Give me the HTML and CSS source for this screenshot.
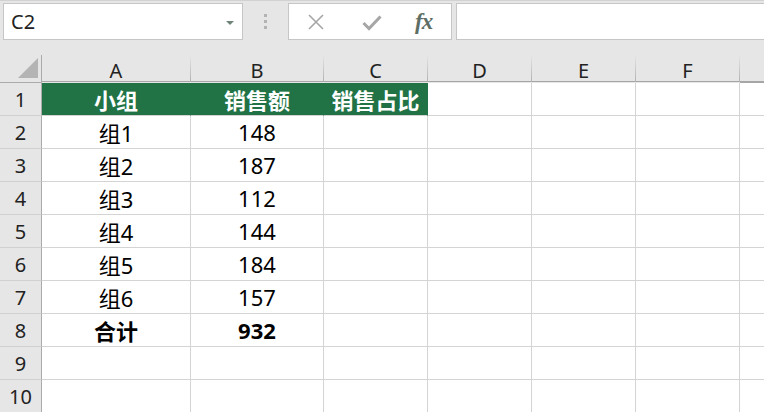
FILE: index.html
```html
<!DOCTYPE html>
<html lang="zh-CN">
<head>
<meta charset="utf-8">
<title>Sheet</title>
<link rel="stylesheet" href="styles.css">
</head>
<body>
<div class="app">
  <div class="toolbar">
    <div class="namebox">
      <span class="name">C2</span>
      <span class="arrow"></span>
    </div>
    <div class="grip"><i></i><i></i><i></i></div>
    <div class="fbuttons">
      <svg class="ico-x" width="16" height="16" viewBox="0 0 16 16"><path d="M1 1 L15 15 M15 1 L1 15" stroke="#a6a6a6" stroke-width="1.6" fill="none"/></svg>
      <svg class="ico-check" width="20" height="16" viewBox="0 0 20 16"><path d="M1.5 8 L7 13.5 L18.5 1.5" stroke="#a6a6a6" stroke-width="3" fill="none"/></svg>
      <span class="fx">fx</span>
    </div>
    <div class="finput"></div>
  </div>
  <div class="sheet">
    <div class="corner"><span class="tri"></span></div>
    <div class="colhead">A</div>
    <div class="colhead">B</div>
    <div class="colhead">C</div>
    <div class="colhead">D</div>
    <div class="colhead">E</div>
    <div class="colhead">F</div>
    <div class="colhead last"></div>

    <div class="rowhead">1</div>
    <div class="cell head">小组</div>
    <div class="cell head">销售额</div>
    <div class="cell head">销售占比</div>
    <div class="cell"></div><div class="cell"></div><div class="cell"></div><div class="cell"></div>

    <div class="rowhead">2</div>
    <div class="cell">组1</div><div class="cell">148</div>
    <div class="cell"></div><div class="cell"></div><div class="cell"></div><div class="cell"></div><div class="cell"></div>

    <div class="rowhead">3</div>
    <div class="cell">组2</div><div class="cell">187</div>
    <div class="cell"></div><div class="cell"></div><div class="cell"></div><div class="cell"></div><div class="cell"></div>

    <div class="rowhead">4</div>
    <div class="cell">组3</div><div class="cell">112</div>
    <div class="cell"></div><div class="cell"></div><div class="cell"></div><div class="cell"></div><div class="cell"></div>

    <div class="rowhead">5</div>
    <div class="cell">组4</div><div class="cell">144</div>
    <div class="cell"></div><div class="cell"></div><div class="cell"></div><div class="cell"></div><div class="cell"></div>

    <div class="rowhead">6</div>
    <div class="cell">组5</div><div class="cell">184</div>
    <div class="cell"></div><div class="cell"></div><div class="cell"></div><div class="cell"></div><div class="cell"></div>

    <div class="rowhead">7</div>
    <div class="cell">组6</div><div class="cell">157</div>
    <div class="cell"></div><div class="cell"></div><div class="cell"></div><div class="cell"></div><div class="cell"></div>

    <div class="rowhead">8</div>
    <div class="cell bold">合计</div><div class="cell bold">932</div>
    <div class="cell"></div><div class="cell"></div><div class="cell"></div><div class="cell"></div><div class="cell"></div>

    <div class="rowhead">9</div>
    <div class="cell"></div><div class="cell"></div>
    <div class="cell"></div><div class="cell"></div><div class="cell"></div><div class="cell"></div><div class="cell"></div>

    <div class="rowhead">10</div>
    <div class="cell"></div><div class="cell"></div>
    <div class="cell"></div><div class="cell"></div><div class="cell"></div><div class="cell"></div><div class="cell"></div>
  </div>
</div>
</body>
</html>
```

FILE: styles.css
```css
* { box-sizing: border-box; }
html, body { margin: 0; padding: 0; }
body {
  width: 764px;
  height: 412px;
  overflow: hidden;
  background: #ffffff;
  font-family: "Noto Sans", "Noto Sans CJK SC", sans-serif;
  color: #000;
}
.app { width: 764px; }

.toolbar {
  height: 55px;
  background: #e6e6e6;
  border-top: 1px solid #d2d2d2;
  display: flex;
  align-items: flex-start;
  padding-top: 2px;
}
.namebox {
  margin-left: 3px;
  width: 240px;
  height: 37px;
  background: #fff;
  border: 1px solid #c6c6c6;
  display: flex;
  align-items: center;
  justify-content: space-between;
  padding: 0 8px 0 7px;
}
.name {
  font-family: "Noto Sans", sans-serif;
  font-size: 20px;
  color: #222;
}
.arrow {
  width: 0; height: 0;
  border-left: 4px solid transparent;
  border-right: 4px solid transparent;
  border-top: 4px solid #6f8479;
  margin-top: 2px;
}
.grip {
  width: 45px;
  height: 37px;
  display: flex;
  flex-direction: column;
  align-items: center;
  justify-content: center;
  gap: 3px;
}
.grip i {
  display: block;
  width: 3px;
  height: 3px;
  background: #b3b3b3;
}
.fbuttons {
  width: 164px;
  height: 37px;
  background: #fff;
  border: 1px solid #c6c6c6;
  display: flex;
  align-items: center;
  padding-left: 19px;
}
.ico-x { margin-top: 1px; }
.ico-check { margin-left: 38px; margin-top: 2px; }
.fx {
  margin-left: 33px;
  font-family: "Liberation Serif", "DejaVu Serif", serif;
  font-style: italic;
  font-weight: bold;
  font-size: 23px;
  color: #5d6e64;
  letter-spacing: -1px;
}
.finput {
  margin-left: 4px;
  flex: 1;
  height: 37px;
  background: #fff;
  border: 1px solid #c6c6c6;
  border-right: none;
}

.sheet {
  display: grid;
  grid-template-columns: 42px 149px 133px 104px 104px 104px 104px 1fr;
  grid-template-rows: 28px repeat(10, 33px);
}
.corner {
  background: #e6e6e6;
  border-right: 1px solid #ababab;
  border-bottom: 1px solid #ababab;
  position: relative;
}
.tri {
  position: absolute;
  right: 3px;
  bottom: 4px;
  width: 0; height: 0;
  border-left: 20px solid transparent;
  border-bottom: 20px solid #b4b4b4;
}
.colhead {
  background: #e6e6e6;
  border-bottom: 1px solid #a6a6a6;
  border-right: 1px solid #c4c4c4;
  border-image: linear-gradient(to bottom, #e6e6e6, #b0b0b0) 0 1 0 0;
  box-shadow: inset 0 -1px 0 #a6a6a6;
  font-size: 20px;
  color: #222;
  display: flex;
  align-items: center;
  justify-content: center;
  padding-top: 4px;
}
.colhead.last { border-right: none; border-image: none; }
.rowhead {
  background: #e6e6e6;
  border-right: 1px solid #ababab;
  border-bottom: 1px solid #d0d0d0;
  font-size: 20px;
  color: #222;
  display: flex;
  align-items: center;
  justify-content: center;
}
.cell {
  border-right: 1px solid #d4d4d4;
  border-bottom: 1px solid #d4d4d4;
  font-size: 22px;
  display: flex;
  align-items: center;
  justify-content: center;
  white-space: nowrap;
  overflow: hidden;
}
.cell:nth-child(8n) { border-right: none; }
.cell.head {
  background: #217346;
  color: #fff;
  font-weight: bold;
  border-right-color: #217346;
}
.cell.bold { font-weight: bold; }
```
